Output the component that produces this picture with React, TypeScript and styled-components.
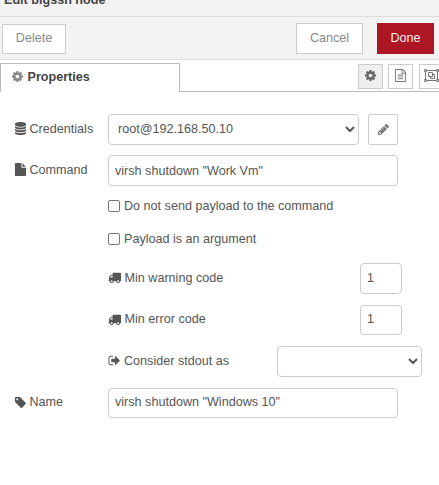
import React from "react";
import styled, { createGlobalStyle, css } from "styled-components";

const GlobalStyle = createGlobalStyle`
  *, *::before, *::after { box-sizing: border-box; }
  html, body { margin: 0; background: #fff; overflow: hidden; }
  body, input, select, button {
    font-family: "Liberation Sans", Arial, Helvetica, sans-serif;
    font-size: 12.6px;
    line-height: 18px;
    color: #555;
  }
`;

const glyphs = {
  cog: "M1152 896q0-106-75-181t-181-75-181 75-75 181 75 181 181 75 181-75 75-181zm512-109v222q0 12-8 23t-20 13l-185 28q-19 54-39 91 35 50 107 138 10 12 10 25t-9 23q-27 37-99 108t-94 71q-12 0-26-9l-138-108q-44 23-91 38-16 136-29 186-7 28-36 28h-222q-14 0-24.5-8.5t-11.5-21.5l-28-184q-49-16-90-37l-141 107q-10 9-25 9-14 0-25-11-126-114-165-168-7-10-7-23 0-12 8-23 15-21 51-66.5t54-70.5q-27-50-41-99l-183-27q-13-2-21-12.5t-8-23.5v-222q0-12 8-23t19-13l186-28q14-46 39-92-40-57-107-138-10-12-10-24 0-10 9-23 26-36 98.5-107.5t94.5-71.5q13 0 26 10l138 107q44-23 91-38 16-136 29-186 7-28 36-28h222q14 0 24.5 8.5t11.5 21.5l28 184q49 16 90 37l142-107q9-9 24-9 13 0 25 10 129 119 165 170 7 8 7 22 0 12-8 23-15 21-51 66.5t-54 70.5q26 50 41 98l183 28q13 2 21 12.5t8 23.5z",
  truck: "M640 1408q0-52-38-90t-90-38-90 38-38 90 38 90 90 38 90-38 38-90zm-384-512h384v-256h-158q-13 0-22 9l-195 195q-9 9-9 22v30zm1280 512q0-52-38-90t-90-38-90 38-38 90 38 90 90 38 90-38 38-90zm256-1088v1024q0 15-4 26.5t-13.5 18.5-16.5 11.5-23.5 6-22.5 2-25.5 0-22.5-.5q0 106-75 181t-181 75-181-75-75-181h-384q0 106-75 181t-181 75-181-75-75-181h-64q-3 0-22.5.5t-25.5 0-22.5-2-23.5-6-16.5-11.5-13.5-18.5-4-26.5q0-26 19-45t45-19v-320q0-8-.5-35t0-38 2.5-34.5 6.5-37 14-30.5 22.5-30l198-198q19-19 50.5-32t58.5-13h160v-192q0-26 19-45t45-19h1024q26 0 45 19t19 45z",
  pencil: "M491 1536l91-91-235-235-91 91v107h128v128h107zm523-928q0-22-22-22-10 0-17 7l-542 542q-7 7-7 17 0 22 22 22 10 0 17-7l542-542q7-7 7-17zm-54-192l416 416-832 832h-416v-416zm683 96q0 53-37 90l-166 166-416-416 166-165q36-38 90-38 53 0 91 38l235 234q37 39 37 91z",
  tag: "M576 448q0-53-37.5-90.5t-90.5-37.5-90.5 37.5-37.5 90.5 37.5 90.5 90.5 37.5 90.5-37.5 37.5-90.5zm1067 576q0 53-37 90l-491 492q-39 37-91 37-53 0-90-37l-715-716q-38-37-64.5-101t-26.5-117v-416q0-52 38-90t90-38h416q53 0 117 26.5t102 64.5l715 714q37 39 37 91z",
  signOut: "M704 1440q0 4 1 20t.5 26.5-3 23.5-10 19.5-20.5 6.5h-320q-119 0-203.5-84.5t-84.5-203.5v-704q0-119 84.5-203.5t203.5-84.5h320q13 0 22.5 9.5t9.5 22.5q0 4 1 20t.5 26.5-3 23.5-10 19.5-20.5 6.5h-320q-66 0-113 47t-47 113v704q0 66 47 113t113 47h312l11.5 1 11.5 3 8 5.5 7 9 2 13.5zm928-544q0 26-19 45l-544 544q-19 19-45 19t-45-19-19-45v-288h-448q-26 0-45-19t-19-45v-384q0-26 19-45t45-19h448v-288q0-26 19-45t45-19 45 19l544 544q19 19 19 45z",
  file: "M1152 512v-472q22 14 36 28l408 408q14 14 28 36h-472zm-128 32q0 40 28 68t68 28h544v1056q0 40-28 68t-68 28h-1344q-40 0-68-28t-28-68v-1600q0-40 28-68t68-28h800v544z",
  fileText: "M1596 380q28 28 48 76t20 88v1152q0 40-28 68t-68 28h-1344q-40 0-68-28t-28-68v-1600q0-40 28-68t68-28h896q40 0 88 20t76 48zm-444-244v376h376q-10-29-22-41l-313-313q-12-12-41-22zm384 1528v-1024h-416q-40 0-68-28t-28-68v-416h-768v1536h1280zm-1024-864q0-14 9-23t23-9h704q14 0 23 9t9 23v64q0 14-9 23t-23 9h-704q-14 0-23-9t-9-23v-64zm736 224q14 0 23 9t9 23v64q0 14-9 23t-23 9h-704q-14 0-23-9t-9-23v-64q0-14 9-23t23-9h704zm0 256q14 0 23 9t9 23v64q0 14-9 23t-23 9h-704q-14 0-23-9t-9-23v-64q0-14 9-23t23-9h704z",
  database: "M896 768q237 0 443-43t325-127v170q0 69-103 128t-280 93.5-385 34.5-385-34.5-280-93.5-103-128v-170q119 84 325 127t443 43zm0 768q237 0 443-43t325-127v170q0 69-103 128t-280 93.5-385 34.5-385-34.5-280-93.5-103-128v-170q119 84 325 127t443 43zm0-384q237 0 443-43t325-127v170q0 69-103 128t-280 93.5-385 34.5-385-34.5-280-93.5-103-128v-170q119 84 325 127t443 43zm0-1152q208 0 385 34.5t280 93.5 103 128v128q0 69-103 128t-280 93.5-385 34.5-385-34.5-280-93.5-103-128v-128q0-69 103-128t280-93.5 385-34.5z",
};

const Glyph = styled.svg`
  flex: none;
  display: block;
  width: 13px;
  height: 13px;
  fill: currentColor;
`;

const Icon = ({ name }: { name: keyof typeof glyphs }) => (
  <Glyph viewBox="0 0 1792 1792">
    <path d={glyphs[name]} />
  </Glyph>
);

const GroupGlyph = styled.svg`
  flex: none;
  display: block;
  width: 15px;
  height: 13px;
  fill: none;
  stroke: currentColor;
`;

const ObjectGroupIcon = () => (
  <GroupGlyph viewBox="0 0 15 13">
    <path d="M2.5 1.5h10M2.5 11.5h10M1.5 2.5v8M13.5 2.5v8" />
    <path d="M.5.5h2v2h-2zM12.5.5h2v2h-2zM.5 10.5h2v2h-2zM12.5 10.5h2v2h-2z" />
    <path d="M4.5 3.5h4v4h-4zM8.5 5.5h2v4h-4v-2" />
  </GroupGlyph>
);

const Panel = styled.main`
  width: 439px;
  height: 485px;
  overflow: hidden;
  background: #fff;
`;

const TitleBar = styled.header`
  display: flex;
  align-items: flex-end;
  height: 17px;
  padding: 0 0 7px 4px;
  background: #f3f3f3;
  border-bottom: 1px solid #ddd;
  font-weight: bold;
  color: #444;
`;

const Toolbar = styled.div`
  display: flex;
  align-items: flex-start;
  height: 43px;
  padding: 6px 5px 0 2px;
  background: #f3f3f3;
  border-bottom: 1px solid #ddd;
`;

const Button = styled.button<{ $w: number; $primary?: boolean; $small?: boolean }>`
  width: ${(p) => p.$w}px;
  height: ${(p) => (p.$small ? 30 : 31)}px;
  margin-top: ${(p) => (p.$small ? 1 : 0)}px;
  padding: 0 0 2px;
  background: #fff;
  border: 1px solid #ccc;
  border-radius: 0;
  color: #888;
  ${(p) =>
    p.$primary &&
    css`
      margin-left: 14px;
      background: #ad1625;
      border-color: #ad1625;
      color: #eee;
    `}
`;

const Spacer = styled.div`
  flex: 1;
`;

const TabBar = styled.nav`
  display: flex;
  height: 32px;
  padding-top: 3px;
`;

const Tab = styled.div`
  display: flex;
  align-items: center;
  gap: 4px;
  width: 180px;
  height: 29px;
  padding: 0 0 3px 9.5px;
  border: solid #bbb;
  border-width: 1px 1px 0;
  font-weight: bold;
  color: #444;
  svg { color: #888; }
`;

const TabTools = styled.div`
  display: flex;
  flex: 1;
  gap: 5px;
  min-width: 0;
  padding: 1px 0 0 178px;
  border-bottom: 1px solid #bbb;
`;

const TabButton = styled.div<{ $active?: boolean }>`
  flex: none;
  display: flex;
  align-items: center;
  justify-content: center;
  width: 25px;
  height: 25px;
  padding-bottom: 2px;
  border: 1px solid #ccc;
  background: ${(p) => (p.$active ? "#efefef" : "#fff")};
  color: ${(p) => (p.$active ? "#666" : "#777")};
  &:last-child { margin-left: 1px; }
`;

const Form = styled.form`
  padding: 22px 0 0 14px;
`;

const Row = styled.div<{ $h?: number; $gap?: number; $indent?: boolean }>`
  display: flex;
  align-items: center;
  height: ${(p) => p.$h ?? 31}px;
  margin-bottom: ${(p) => p.$gap ?? 10}px;
  padding-left: ${(p) => (p.$indent ? 94 : 0)}px;
`;

const Label = styled.label<{ $w: number; $gap?: number }>`
  flex: none;
  display: flex;
  align-items: center;
  gap: ${(p) => p.$gap ?? 2.5}px;
  width: ${(p) => p.$w}px;
  padding-bottom: 2px;
  white-space: nowrap;
`;

const fieldBox = css<{ $w: number }>`
  width: ${(p) => p.$w}px;
  height: 100%;
  margin: 0;
  background: #fff;
  border: 1px solid #ccc;
  border-radius: 4px;
  color: #555;
  outline: none;
`;

const TextInput = styled.input<{ $w: number; $raise?: boolean }>`
  ${fieldBox}
  padding: 0 6px ${(p) => (p.$raise ? 2 : 0)}px;
`;

const Select = styled.select<{ $w: number }>`
  ${fieldBox}
  padding: 0 0 1px 5px;
`;

const EditButton = styled.button`
  display: flex;
  align-items: center;
  justify-content: center;
  width: 30px;
  height: 31px;
  margin-left: 9px;
  padding: 0 0 1px;
  background: #fff;
  border: 1px solid #ccc;
  border-radius: 2px;
  color: #777;
`;

const Checkbox = styled.input`
  appearance: none;
  width: 12px;
  height: 12px;
  margin: 0;
  background: #fff;
  border: 1px solid #777;
  border-radius: 2px;
`;

const CheckLabel = styled.label`
  display: flex;
  align-items: center;
  gap: 4px;
`;

export default function App() {
  return (
    <>
      <GlobalStyle />
      <Panel>
        <TitleBar>Edit bigssh node</TitleBar>
        <Toolbar>
          <Button $w={64} $small>Delete</Button>
          <Spacer />
          <Button $w={67}>Cancel</Button>
          <Button $w={57} $primary>Done</Button>
        </Toolbar>
        <TabBar>
          <Tab><Icon name="cog" />Properties</Tab>
          <TabTools>
            <TabButton $active><Icon name="cog" /></TabButton>
            <TabButton><Icon name="fileText" /></TabButton>
            <TabButton><ObjectGroupIcon /></TabButton>
          </TabTools>
        </TabBar>
        <Form>
          <Row>
            <Label $w={94}><Icon name="database" />Credentials</Label>
            <Select $w={251}><option>root@192.168.50.10</option></Select>
            <EditButton type="button"><Icon name="pencil" /></EditButton>
          </Row>
          <Row>
            <Label $w={94}><Icon name="file" />Command</Label>
            <TextInput $w={290} defaultValue={'virsh shutdown "Work Vm"'} />
          </Row>
          <Row $h={20} $gap={13} $indent>
            <CheckLabel><Checkbox type="checkbox" />Do not send payload to the command</CheckLabel>
          </Row>
          <Row $h={20} $gap={14} $indent>
            <CheckLabel><Checkbox type="checkbox" />Payload is an argument</CheckLabel>
          </Row>
          <Row $gap={11} $indent>
            <Label $w={252} $gap={3.5}><Icon name="truck" />Min warning code</Label>
            <TextInput $w={42} $raise defaultValue="1" />
          </Row>
          <Row $h={30} $gap={11} $indent>
            <Label $w={252} $gap={3.5}><Icon name="truck" />Min error code</Label>
            <TextInput $w={42} $raise defaultValue="1" />
          </Row>
          <Row $gap={11} $indent>
            <Label $w={169} $gap={3}><Icon name="signOut" />Consider stdout as</Label>
            <Select $w={145}><option></option></Select>
          </Row>
          <Row $h={30}>
            <Label $w={94}><Icon name="tag" />Name</Label>
            <TextInput $w={290} $raise defaultValue={'virsh shutdown "Windows 10"'} />
          </Row>
        </Form>
      </Panel>
    </>
  );
}
